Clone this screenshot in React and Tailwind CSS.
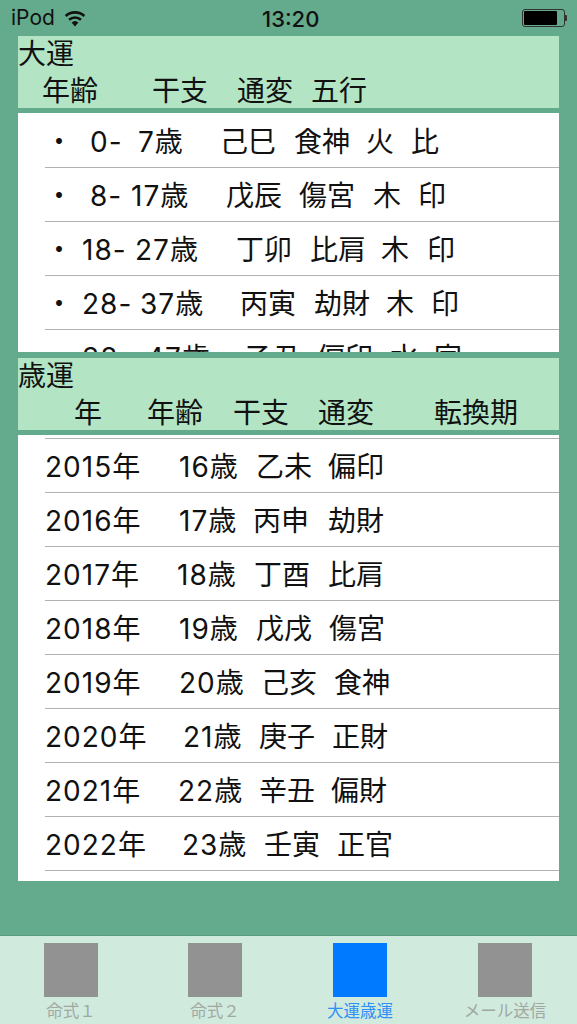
import React from "react";

// each cell: text + width class (columns don't line up between rows in the original)
const daiun = [
  [["・", "w-[45px]"], ["0-", "w-[48px]"], ["7歳", "w-[82px]"], ["己巳", "w-[74px]"], ["食神", "w-[72px]"], ["火", "w-[45px]"], ["比", ""]],
  [["・", "w-[45px]"], ["8-", "w-[41px]"], ["17歳", "w-[95px]"], ["戊辰", "w-[73px]"], ["傷宮", "w-[74px]"], ["木", "w-[45px]"], ["印", ""]],
  [["・", "w-[37px]"], ["18-", "w-[53px]"], ["27歳", "w-[101px]"], ["丁卯", "w-[74px]"], ["比肩", "w-[71px]"], ["木", "w-[46px]"], ["印", ""]],
  [["・", "w-[37px]"], ["28-", "w-[58px]"], ["37歳", "w-[100px]"], ["丙寅", "w-[74px]"], ["劫財", "w-[72px]"], ["木", "w-[45px]"], ["印", ""]],
  [["・", "w-[37px]"], ["38-", "w-[64px]"], ["47歳", "w-[99px]"], ["乙丑", "w-[72px]"], ["偏印", "w-[73px]"], ["水", "w-[44px]"], ["官", ""]],
];

const saiun = [
  [["2015年", "w-[134px]"], ["16歳", "w-[77px]"], ["乙未", "w-[72px]"], ["偏印", ""]],
  [["2016年", "w-[134px]"], ["17歳", "w-[74px]"], ["丙申", "w-[75px]"], ["劫財", ""]],
  [["2017年", "w-[132px]"], ["18歳", "w-[77px]"], ["丁酉", "w-[74px]"], ["比肩", ""]],
  [["2018年", "w-[134px]"], ["19歳", "w-[77px]"], ["戊戌", "w-[73px]"], ["傷宮", ""]],
  [["2019年", "w-[134px]"], ["20歳", "w-[82px]"], ["己亥", "w-[73px]"], ["食神", ""]],
  [["2020年", "w-[138px]"], ["21歳", "w-[76px]"], ["庚子", "w-[73px]"], ["正財", ""]],
  [["2021年", "w-[133px]"], ["22歳", "w-[81px]"], ["辛丑", "w-[72px]"], ["偏財", ""]],
  [["2022年", "w-[137px]"], ["23歳", "w-[82px]"], ["壬寅", "w-[73px]"], ["正官", ""]],
];

const tabs = [
  { label: "命式１", active: false, w: "w-[144px]" },
  { label: "命式２", active: false, w: "w-[145px]" },
  { label: "大運歳運", active: true, w: "w-[145px]" },
  { label: "メール送信", active: false, w: "w-[54px]" },
];

const Row = ({ cells }) => (
  <div className="ml-[27px] h-[54px] pt-[3px] border-b border-[#b2b2b2] flex items-center text-[28px] text-[#111] whitespace-nowrap">
    {cells.map(([text, w], i) => (
      <span key={i} className={`shrink-0 ${w} ${/\d/.test(text) ? "tracking-[1px]" : ""}`}>
        {text}
      </span>
    ))}
  </div>
);

const Header = ({ title, pad, cols }) => (
  <div className="h-[72px] bg-[#b3e5c5] text-[28px] leading-[37px] text-[#111]">
    <div>{title}</div>
    <div className={`flex whitespace-nowrap ${pad}`}>
      {cols.map(([text, w], i) => (
        <span key={i} className={`shrink-0 ${w}`}>
          {text}
        </span>
      ))}
    </div>
  </div>
);

export default function App() {
  return (
    <div className="w-[577px] h-[1024px] flex flex-col bg-[#64aa8d] font-['Inter','Noto_Sans_CJK_JP',sans-serif] overflow-hidden">
      {/* status bar */}
      <div className="h-[36px] shrink-0 flex items-center justify-between pl-[11px] pr-[10px] text-[#111] relative">
        <div className="flex items-center gap-[9px] text-[21px]">
          <span>iPod</span>
          <svg width="22" height="17" viewBox="0 0 22 17" fill="#111">
            <path d="M11 16.5 7.6 12.6a5 5 0 0 1 6.8 0Z" />
            <path d="M5.9 10.7 4.2 8.8a10.2 10.2 0 0 1 13.6 0l-1.7 1.9a7.6 7.6 0 0 0-10.2 0Z" />
            <path d="M2.5 6.9.8 5a15.3 15.3 0 0 1 20.4 0l-1.7 1.9a12.8 12.8 0 0 0-17 0Z" />
          </svg>
        </div>
        <span className="absolute left-[262px] top-[3px] text-[22px] font-medium">13:20</span>
        <div className="flex items-center">
          <div className="w-[43px] h-[18px] border border-[#333] rounded-[3px] p-[1px]">
            <div className="w-[33px] h-full bg-black rounded-[1px]" />
          </div>
          <div className="w-[2px] h-[6px] bg-[#333] rounded-r-[1px]" />
        </div>
      </div>

      <div className="mx-[18px] flex flex-col">
        <Header
          title="大運"
          pad="pl-[24px]"
          cols={[
            ["年齢", "w-[110px]"],
            ["干支", "w-[85px]"],
            ["通変", "w-[74px]"],
            ["五行", ""],
          ]}
        />
        <div className="mt-[5px] h-[239px] pt-[1px] bg-white overflow-hidden">
          {daiun.map((cells, i) => (
            <Row key={i} cells={cells} />
          ))}
        </div>

        <div className="mt-[6px]">
          <Header
            title="歳運"
            pad="pl-[56px]"
            cols={[
              ["年", "w-[73px]"],
              ["年齢", "w-[86px]"],
              ["干支", "w-[85px]"],
              ["通変", "w-[116px]"],
              ["転換期", ""],
            ]}
          />
        </div>
        <div className="mt-[5px] h-[446px] bg-white overflow-hidden">
          <div className="ml-[27px] h-[4px] border-b border-[#b2b2b2]" />
          {saiun.map((cells, i) => (
            <Row key={i} cells={cells} />
          ))}
        </div>
      </div>

      <div className="flex-1" />

      {/* tab bar */}
      <div className="h-[89px] shrink-0 bg-[#d1eade] border-t border-[#5a9a7e] flex pl-[44px] pt-[7px]">
        {tabs.map((t) => (
          <div key={t.label} className={`shrink-0 ${t.w}`}>
            <div className="w-[54px] flex flex-col items-center">
              <div className={`w-[54px] h-[54px] shrink-0 ${t.active ? "bg-[#007aff]" : "bg-[#929292]"}`} />
              <span className={`mt-[4px] text-[16.5px] leading-[20px] whitespace-nowrap ${t.active ? "text-[#2f8ff5]" : "text-[#a0a8a3]"}`}>
                {t.label}
              </span>
            </div>
          </div>
        ))}
      </div>
    </div>
  );
}
